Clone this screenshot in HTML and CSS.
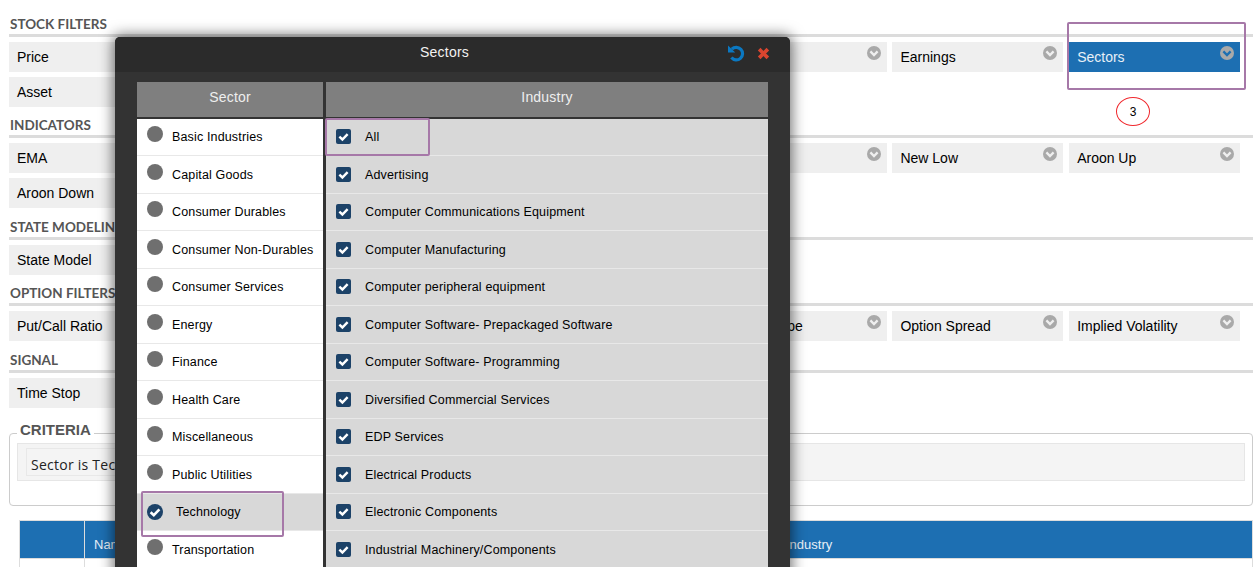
FILE: index.html
```html
<!DOCTYPE html>
<html lang="en">
<head>
<meta charset="utf-8">
<title>Stock Filters</title>
<link rel="stylesheet" href="styles.css">
</head>
<body>
<svg class="defs" width="0" height="0" aria-hidden="true">
  <symbol id="chev" viewBox="0 0 14 14">
    <circle cx="7" cy="7" r="7" fill="#a9a9a9"/>
    <path d="M3.4 5.4 7 9l3.6-3.6" fill="none" stroke="currentColor" stroke-width="2.3"/>
  </symbol>
  <symbol id="tick" viewBox="0 0 16 16">
    <path d="M3.6 8.2 6.8 11.2 12.4 5.4" fill="none" stroke="#fff" stroke-width="2.6"/>
  </symbol>
</svg>
<main class="page">
  <section class="group">
    <h2 class="group-title">STOCK FILTERS</h2>
    <div class="cells">
      <div class="cell">Price<svg class="chev"><use href="#chev"/></svg></div>
      <div class="cell"><svg class="chev"><use href="#chev"/></svg></div>
      <div class="cell"><svg class="chev"><use href="#chev"/></svg></div>
      <div class="cell"><svg class="chev"><use href="#chev"/></svg></div>
      <div class="cell"><svg class="chev"><use href="#chev"/></svg></div>
      <div class="cell">Earnings<svg class="chev"><use href="#chev"/></svg></div>
      <div class="cell cell-active">Sectors<svg class="chev"><use href="#chev"/></svg></div>
      <div class="cell">Asset<svg class="chev"><use href="#chev"/></svg></div>
    </div>
  </section>
  <section class="group">
    <h2 class="group-title">INDICATORS</h2>
    <div class="cells">
      <div class="cell">EMA<svg class="chev"><use href="#chev"/></svg></div>
      <div class="cell"><svg class="chev"><use href="#chev"/></svg></div>
      <div class="cell"><svg class="chev"><use href="#chev"/></svg></div>
      <div class="cell"><svg class="chev"><use href="#chev"/></svg></div>
      <div class="cell"><svg class="chev"><use href="#chev"/></svg></div>
      <div class="cell">New Low<svg class="chev"><use href="#chev"/></svg></div>
      <div class="cell">Aroon Up<svg class="chev"><use href="#chev"/></svg></div>
      <div class="cell">Aroon Down<svg class="chev"><use href="#chev"/></svg></div>
    </div>
  </section>
  <section class="group">
    <h2 class="group-title">STATE MODELING</h2>
    <div class="cells">
      <div class="cell">State Model<svg class="chev"><use href="#chev"/></svg></div>
    </div>
  </section>
  <section class="group">
    <h2 class="group-title">OPTION FILTERS</h2>
    <div class="cells">
      <div class="cell">Put/Call Ratio<svg class="chev"><use href="#chev"/></svg></div>
      <div class="cell"><svg class="chev"><use href="#chev"/></svg></div>
      <div class="cell"><svg class="chev"><use href="#chev"/></svg></div>
      <div class="cell"><svg class="chev"><use href="#chev"/></svg></div>
      <div class="cell">Spread Type<svg class="chev"><use href="#chev"/></svg></div>
      <div class="cell">Option Spread<svg class="chev"><use href="#chev"/></svg></div>
      <div class="cell">Implied Volatility<svg class="chev"><use href="#chev"/></svg></div>
    </div>
  </section>
  <section class="group">
    <h2 class="group-title">SIGNAL</h2>
    <div class="cells">
      <div class="cell">Time Stop<svg class="chev"><use href="#chev"/></svg></div>
    </div>
  </section>
  <fieldset class="criteria">
    <legend class="criteria-title">CRITERIA</legend>
    <div class="criteria-box"><span class="criteria-text">Sector is Technology</span></div>
  </fieldset>
  <table class="results">
    <thead>
      <tr><th class="col-a"></th><th class="col-b">Name</th><th class="col-c">Industry</th></tr>
    </thead>
    <tbody>
      <tr><td></td><td></td><td></td></tr>
    </tbody>
  </table>
</main>

<div class="modal">
  <header class="modal-head">
    <span class="modal-title">Sectors</span>
    <span class="modal-tools">
      <svg class="tool-undo" viewBox="0 0 18 18" width="18" height="18"><path d="M4.8 5.2A6.3 6.3 0 1 1 4.4 13.6" fill="none" stroke="#0b78c1" stroke-width="3.2"/><path d="M1 1.4V8.6H8.2z" fill="#0b78c1"/></svg>
      <svg class="tool-close" viewBox="0 0 12 12" width="13" height="13"><path d="M2 2l8 8M10 2l-8 8" fill="none" stroke="#d9452f" stroke-width="3.4"/></svg>
    </span>
  </header>
  <div class="modal-body">
    <div class="col col-sector">
      <div class="col-head">Sector</div>
      <ul class="list">
        <li class="row"><i class="dot"></i>Basic Industries</li>
        <li class="row"><i class="dot"></i>Capital Goods</li>
        <li class="row"><i class="dot"></i>Consumer Durables</li>
        <li class="row"><i class="dot"></i>Consumer Non-Durables</li>
        <li class="row"><i class="dot"></i>Consumer Services</li>
        <li class="row"><i class="dot"></i>Energy</li>
        <li class="row"><i class="dot"></i>Finance</li>
        <li class="row"><i class="dot"></i>Health Care</li>
        <li class="row"><i class="dot"></i>Miscellaneous</li>
        <li class="row"><i class="dot"></i>Public Utilities</li>
        <li class="row row-on"><i class="dot dot-on"><svg viewBox="0 0 16 16"><use href="#tick"/></svg></i>Technology</li>
        <li class="row"><i class="dot"></i>Transportation</li>
      </ul>
    </div>
    <div class="col col-industry">
      <div class="col-head">Industry</div>
      <ul class="list">
        <li class="row"><i class="box"><svg viewBox="0 0 16 16"><use href="#tick"/></svg></i>All</li>
        <li class="row"><i class="box"><svg viewBox="0 0 16 16"><use href="#tick"/></svg></i>Advertising</li>
        <li class="row"><i class="box"><svg viewBox="0 0 16 16"><use href="#tick"/></svg></i>Computer Communications Equipment</li>
        <li class="row"><i class="box"><svg viewBox="0 0 16 16"><use href="#tick"/></svg></i>Computer Manufacturing</li>
        <li class="row"><i class="box"><svg viewBox="0 0 16 16"><use href="#tick"/></svg></i>Computer peripheral equipment</li>
        <li class="row"><i class="box"><svg viewBox="0 0 16 16"><use href="#tick"/></svg></i>Computer Software- Prepackaged Software</li>
        <li class="row"><i class="box"><svg viewBox="0 0 16 16"><use href="#tick"/></svg></i>Computer Software- Programming</li>
        <li class="row"><i class="box"><svg viewBox="0 0 16 16"><use href="#tick"/></svg></i>Diversified Commercial Services</li>
        <li class="row"><i class="box"><svg viewBox="0 0 16 16"><use href="#tick"/></svg></i>EDP Services</li>
        <li class="row"><i class="box"><svg viewBox="0 0 16 16"><use href="#tick"/></svg></i>Electrical Products</li>
        <li class="row"><i class="box"><svg viewBox="0 0 16 16"><use href="#tick"/></svg></i>Electronic Components</li>
        <li class="row"><i class="box"><svg viewBox="0 0 16 16"><use href="#tick"/></svg></i>Industrial Machinery/Components</li>
      </ul>
    </div>
  </div>
</div>

<div class="mark mark-sectors"></div>
<div class="mark mark-all"></div>
<div class="mark mark-tech"></div>
<div class="step">3</div>
</body>
</html>
```
FILE: styles.css
```css
* { box-sizing: border-box; }
html, body { margin: 0; height: 567px; overflow: hidden; background: #fff; }
body { font-family: "Liberation Sans", Arial, sans-serif; font-size: 14px; color: #000; position: relative; }
.defs { position: absolute; }

.page { padding: 15px 3px 0 9px; }

.group { margin-bottom: 9.4px; }
.group-title {
  margin: 0 0 5px;
  padding: 0 0 0 1px;
  height: 22px;
  border-bottom: 3px solid #dcdcdc;
  font: 700 13.5px/18px Lato, sans-serif;
  color: #555;
}
.cells {
  display: grid;
  grid-template-columns: repeat(7, 171px);
  column-gap: 5.7px;
  row-gap: 5px;
}
.cell {
  position: relative;
  height: 30px;
  padding-left: 8px;
  line-height: 30px;
  background: #efefef;
  white-space: nowrap;
  color: #000;
}
.cell-active { background: #1d6fb2; color: #e8f0f7; }
.chev { position: absolute; top: 4px; right: 6px; width: 14px; height: 14px; color: #efefef; }
.cell-active .chev { color: #1d6fb2; }

.criteria {
  margin: 13.5px 0 0;
  padding: 0 7px 0;
  height: 85px;
  min-width: 0;
  border: 1px solid #ccc;
  border-radius: 4px;
}
.criteria-title {
  margin-left: 0;
  padding: 0 3px 8px;
  font: 700 15px/17px "Liberation Sans", sans-serif;
  color: #555;
}
.criteria-box {
  height: 38px;
  margin-top: -3px;
  padding: 4px 0 0 8px;
  border: 1px solid #e6e6e6;
  background: #f4f4f4;
}
.criteria-text {
  display: block;
  width: 500px;
  height: 28px;
  padding-left: 4px;
  border: 1px solid #e8e8e8;
  font: 14px/32px "Open Sans", sans-serif;
  letter-spacing: .25px;
  color: #222;
}

.results {
  margin: 14px 0 0 10px;
  width: 1234px;
  border-collapse: collapse;
  table-layout: fixed;
}
.results th {
  height: 38px;
  padding: 9px 8px 0 9px;
  border: 1px solid #ddd;
  background: #1d6fb2;
  color: #e8f0f7;
  font-weight: 400;
  font-size: 13px;
  text-align: left;
}
.results td { height: 38px; border: 1px solid #ddd; }
.col-a { width: 65px; }
.col-b { width: 692px; }

.modal {
  position: absolute;
  left: 115px;
  top: 37px;
  width: 675px;
  height: 560px;
  border-radius: 5px 5px 0 0;
  background: #333;
  box-shadow: 0 0 14px 2px rgba(0, 0, 0, .55);
}
.modal-head {
  position: relative;
  height: 35px;
  padding-right: 16px;
  border-radius: 5px 5px 0 0;
  background: #2b2b2b;
  color: #f2f2f2;
  text-align: center;
  line-height: 31px;
}
.modal-title { font-size: 14px; letter-spacing: .25px; }
.modal-tools { position: absolute; top: 7px; right: 20px; display: flex; align-items: center; gap: 12px; }
.modal-body { display: flex; gap: 3px; padding: 10px 22px 0; }
.col-sector { width: 186px; }
.col-industry { width: 442px; }
.col-head {
  height: 35px;
  background: #7f7f7f;
  color: #eee;
  text-align: center;
  line-height: 30px;
  letter-spacing: .2px;
}
.list { margin: 1.5px 0 0; padding: 0; list-style: none; }
.col-sector .list { background: #fff; }
.col-industry .list { background: #d8d8d8; }
.row {
  display: flex;
  align-items: center;
  height: 37.5px;
  padding-top: 1px;
  border-bottom: 1px solid #e8e8e8;
  font-size: 12.5px;
  letter-spacing: .15px;
}
.row-on { background: #d8d8d8; }
.dot {
  flex: none;
  width: 16px;
  height: 16px;
  margin: -6px 9px 0 10px;
  border-radius: 50%;
  background: #6f6f6f;
}
.dot-on { margin: -1px 13px 0 10px; background: #1c4268; }
.box {
  flex: none;
  width: 15px;
  height: 15px;
  margin: -1px 14px 0 10px;
  border-radius: 2px;
  background: #1c4268;
}
.dot svg, .box svg { display: block; width: 100%; height: 100%; }

.mark { position: absolute; border: 2px solid #a678a8; border-radius: 2px; }
.mark-sectors { left: 1067px; top: 22px; width: 179px; height: 68px; }
.mark-all { left: 325px; top: 118px; width: 105px; height: 38px; }
.mark-tech { left: 141px; top: 491px; width: 143px; height: 46px; }
.step {
  position: absolute;
  left: 1116px;
  top: 97px;
  width: 34px;
  height: 29px;
  border: 1px solid #f0282d;
  border-radius: 50%;
  font-size: 12px;
  font-weight: 400;
  line-height: 28px;
  text-align: center;
}
```
